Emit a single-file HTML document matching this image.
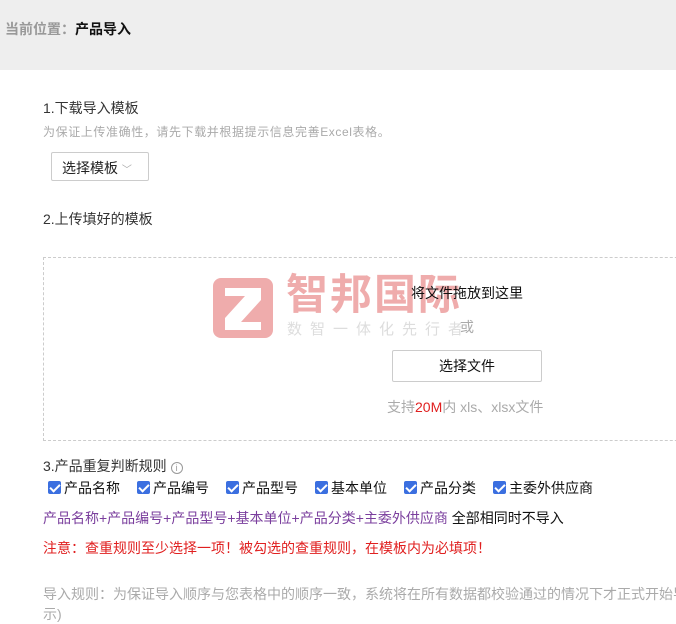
<!DOCTYPE html>
<html><head><meta charset="utf-8"><style>
*{margin:0;padding:0;box-sizing:border-box}
body{width:676px;height:617px;overflow:hidden;background:#fff;font-family:"Liberation Sans","Noto Sans CJK SC",sans-serif;font-size:14px;color:#333;position:relative}
.a{position:absolute;white-space:nowrap}
.hd{position:absolute;left:0;top:0;width:676px;height:70px;background:#eeeeee}
.cb{display:inline-block;width:13px;height:13px;background:#3b6fe0;border-radius:2px;vertical-align:-1px;margin-right:3px;position:relative}
.cb:after{content:"";position:absolute;left:4px;top:1px;width:4px;height:8px;border:solid #fff;border-width:0 2px 2px 0;transform:rotate(45deg)}
.ck{display:inline-block;width:89px}
</style></head><body>
<div class="hd"></div>
<div class="a" style="left:5px;top:19px;font-size:14px;font-weight:bold;color:#999">当前位置：<span style="color:#111">产品导入</span></div>
<div class="a" style="left:43px;top:98px;color:#333">1.下载导入模板</div>
<div class="a" style="left:43px;top:123px;font-size:12px;color:#aaa;letter-spacing:0.6px">为保证上传准确性，请先下载并根据提示信息完善Excel表格。</div>
<div class="a" style="left:51px;top:152px;width:98px;height:29px;border:1px solid #ccc;border-radius:2px;padding:5px 0 0 10px;color:#222">选择模板 <span style="color:#aaa;font-size:10px">﹀</span></div>
<div class="a" style="left:43px;top:209px">2.上传填好的模板</div>
<div class="a" style="left:43px;top:257px;width:700px;height:184px;border:1px dashed #ccc"></div>
<div class="a" style="left:213px;top:278px;width:60px;height:60px;background:#efacac;border-radius:8px"></div>
<svg class="a" style="left:213px;top:278px" width="60" height="60"><path d="M12 10H48V22L28 44H48V52H12V40L32 18H12Z" fill="#fff"/></svg>
<div class="a" style="left:286px;top:270px;font-size:42px;font-weight:bold;color:#efacac;letter-spacing:2px;line-height:50px">智邦国际</div>
<div class="a" style="left:287px;top:320px;font-size:15px;color:#ddd;letter-spacing:8px;line-height:20px">数智一体化先行者</div>
<div class="a" style="left:411px;top:283px;color:#111">将文件拖放到这里</div>
<div class="a" style="left:460px;top:317px;color:#aaa">或</div>
<div class="a" style="left:392px;top:350px;width:150px;height:32px;border:1px solid #ccc;border-radius:2px;text-align:center;line-height:30px;color:#111">选择文件</div>
<div class="a" style="left:387px;top:397px;color:#aaa">支持<span style="color:#e02020">20M</span>内 xls、xlsx文件</div>
<div class="a" style="left:43px;top:456px">3.产品重复判断规则 <span style="display:inline-block;width:12px;height:12px;border:1px solid #999;border-radius:50%;font-size:9px;line-height:10px;text-align:center;color:#999">i</span></div>
<div class="a" style="left:48px;top:478px;color:#111"><span class="ck"><i class="cb"></i>产品名称</span><span class="ck"><i class="cb"></i>产品编号</span><span class="ck"><i class="cb"></i>产品型号</span><span class="ck"><i class="cb"></i>基本单位</span><span class="ck"><i class="cb"></i>产品分类</span><span class="ck"><i class="cb"></i>主委外供应商</span></div>
<div class="a" style="left:43px;top:508px;color:#7a3e9d">产品名称+产品编号+产品型号+基本单位+产品分类+主委外供应商 <span style="color:#111">全部相同时不导入</span></div>
<div class="a" style="left:43px;top:538px;color:#e02020">注意：查重规则至少选择一项！被勾选的查重规则，在模板内为必填项！</div>
<div class="a" style="left:43px;top:584px;color:#aaa">导入规则：为保证导入顺序与您表格中的顺序一致，系统将在所有数据都校验通过的情况下才正式开始导入</div>
<div class="a" style="left:43px;top:604px;color:#aaa">示)</div>
</body></html>
